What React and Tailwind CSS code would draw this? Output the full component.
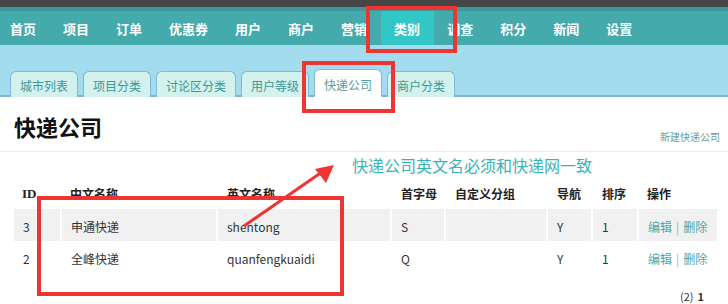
import React from "react";

const navItems = ["首页", "项目", "订单", "优惠券", "用户", "商户", "营销", "类别", "调查", "积分", "新闻", "设置"];
const tabs = ["城市列表", "项目分类", "讨论区分类", "用户等级", "快递公司", "商户分类"];
const cols = "grid grid-cols-[46px_154px_172px_52px_100px_43px_44px_78px] gap-x-[2px]";
const rows = [
  { id: "3", cn: "申通快递", en: "shentong", l: "S", g: "", n: "Y", s: "1" },
  { id: "2", cn: "全峰快递", en: "quanfengkuaidi", l: "Q", g: "", n: "Y", s: "1" },
];

export default function App() {
  return (
    <div className="relative w-[728px] h-[304px] overflow-hidden bg-white font-['Noto_Sans_CJK_SC','Noto_Sans',sans-serif] text-[#333]">
      <div className="h-[7px] bg-[#464646]" />
      <nav className="h-[38px] bg-[#44aaac] border-t-4 border-[#3a9a9b] flex items-stretch -ml-[3.5px]">
        {navItems.map((t) => (
          <div
            key={t}
            className={
              "px-[13.5px] flex items-center text-[13px] font-bold text-white leading-none " +
              (t === "类别" ? "bg-[#33c6c6]" : "")
            }
          >
            {t}
          </div>
        ))}
      </nav>
      <div className="h-[52px] bg-[#a3dcee] border-b-2 border-[#80b4d4] flex items-end gap-[5px] pl-[10px]">
        {tabs.map((t) => (
          <div
            key={t}
            className={
              "h-[26px] px-[9px] -mb-[2px] rounded-t-[6px] border border-[#7fb9d6] flex items-center pt-[3px] text-[12px] leading-none " +
              (t === "快递公司"
                ? "bg-white border-b-white text-[#5a9c9c] h-[28px]"
                : "bg-[#d3f2ee] border-b-0 text-[#3a9898]")
            }
          >
            {t}
          </div>
        ))}
      </div>
      <div className="h-[55px] flex justify-between px-[14px] border-b border-[#e0eefa]">
        <div className="self-center mt-[4px] text-[22px] font-bold text-[#111] leading-none">快递公司</div>
        <div className="self-end mb-[7px] text-[10px] text-[#6a9e9e] mr-[-6px]">新建快递公司</div>
      </div>
      <div className="pl-[14px] mt-[25px]">
        <div className={cols + " h-[32px] items-center pt-[1px] text-[12px] font-bold text-[#222]"}>
          <div className="pl-[8px] font-['Liberation_Serif',serif] text-[13px]">ID</div>
          <div className="pl-[8px]">中文名称</div>
          <div className="pl-[9px]">英文名称</div>
          <div className="pl-[9px]">首字母</div>
          <div className="pl-[9px]">自定义分组</div>
          <div className="pl-[9px]">导航</div>
          <div className="pl-[9px]">排序</div>
          <div className="pl-[8px]">操作</div>
        </div>
        {rows.map((r, i) => {
          const bg = i === 0 ? "bg-[#f1f1f1]" : "bg-white";
          const cell = bg + " h-[32px] flex items-center pt-[3px] pl-[9px]";
          return (
            <div key={r.id} className={cols + " text-[12px] text-[#333]"}>
              <div className={cell}>{r.id}</div>
              <div className={cell}>{r.cn}</div>
              <div className={cell}>{r.en}</div>
              <div className={cell}>{r.l}</div>
              <div className={cell}>{r.g}</div>
              <div className={cell}>{r.n}</div>
              <div className={cell}>{r.s}</div>
              <div className={cell + " pl-[8px]"}>
                <span className="text-[#4fa6a6]">编辑</span>
                <span className="text-[#aaa] mx-[4px]">|</span>
                <span className="text-[#4fa6a6]">删除</span>
              </div>
            </div>
          );
        })}
        <div className="flex justify-end pr-[24px] mt-[17px] text-[11px] leading-[13px] text-[#333] gap-[4px]">
          <span>(2)</span>
          <span className="font-bold">1</span>
        </div>
      </div>

      {/* annotations */}
      <div className="absolute left-[352px] top-[154px] text-[16px] text-[#38b4b6] leading-[22px] whitespace-nowrap">
        快递公司英文名必须和快递网一致
      </div>
      <div className="absolute left-[366px] top-[6px] w-[91px] h-[47px] border-4 border-[#ef3434]" />
      <div className="absolute left-[302px] top-[61px] w-[93px] h-[52px] border-4 border-[#ef3434]" />
      <div className="absolute left-[37px] top-[196px] w-[307px] h-[100px] border-4 border-[#ef3434]" />
      <svg className="absolute left-0 top-0" width="728" height="304" viewBox="0 0 728 304">
        <line x1="244" y1="226" x2="322" y2="172" stroke="#ef3434" strokeWidth="3" />
        <polygon points="334,165 315,169 326,183" fill="#ef3434" />
      </svg>
    </div>
  );
}
